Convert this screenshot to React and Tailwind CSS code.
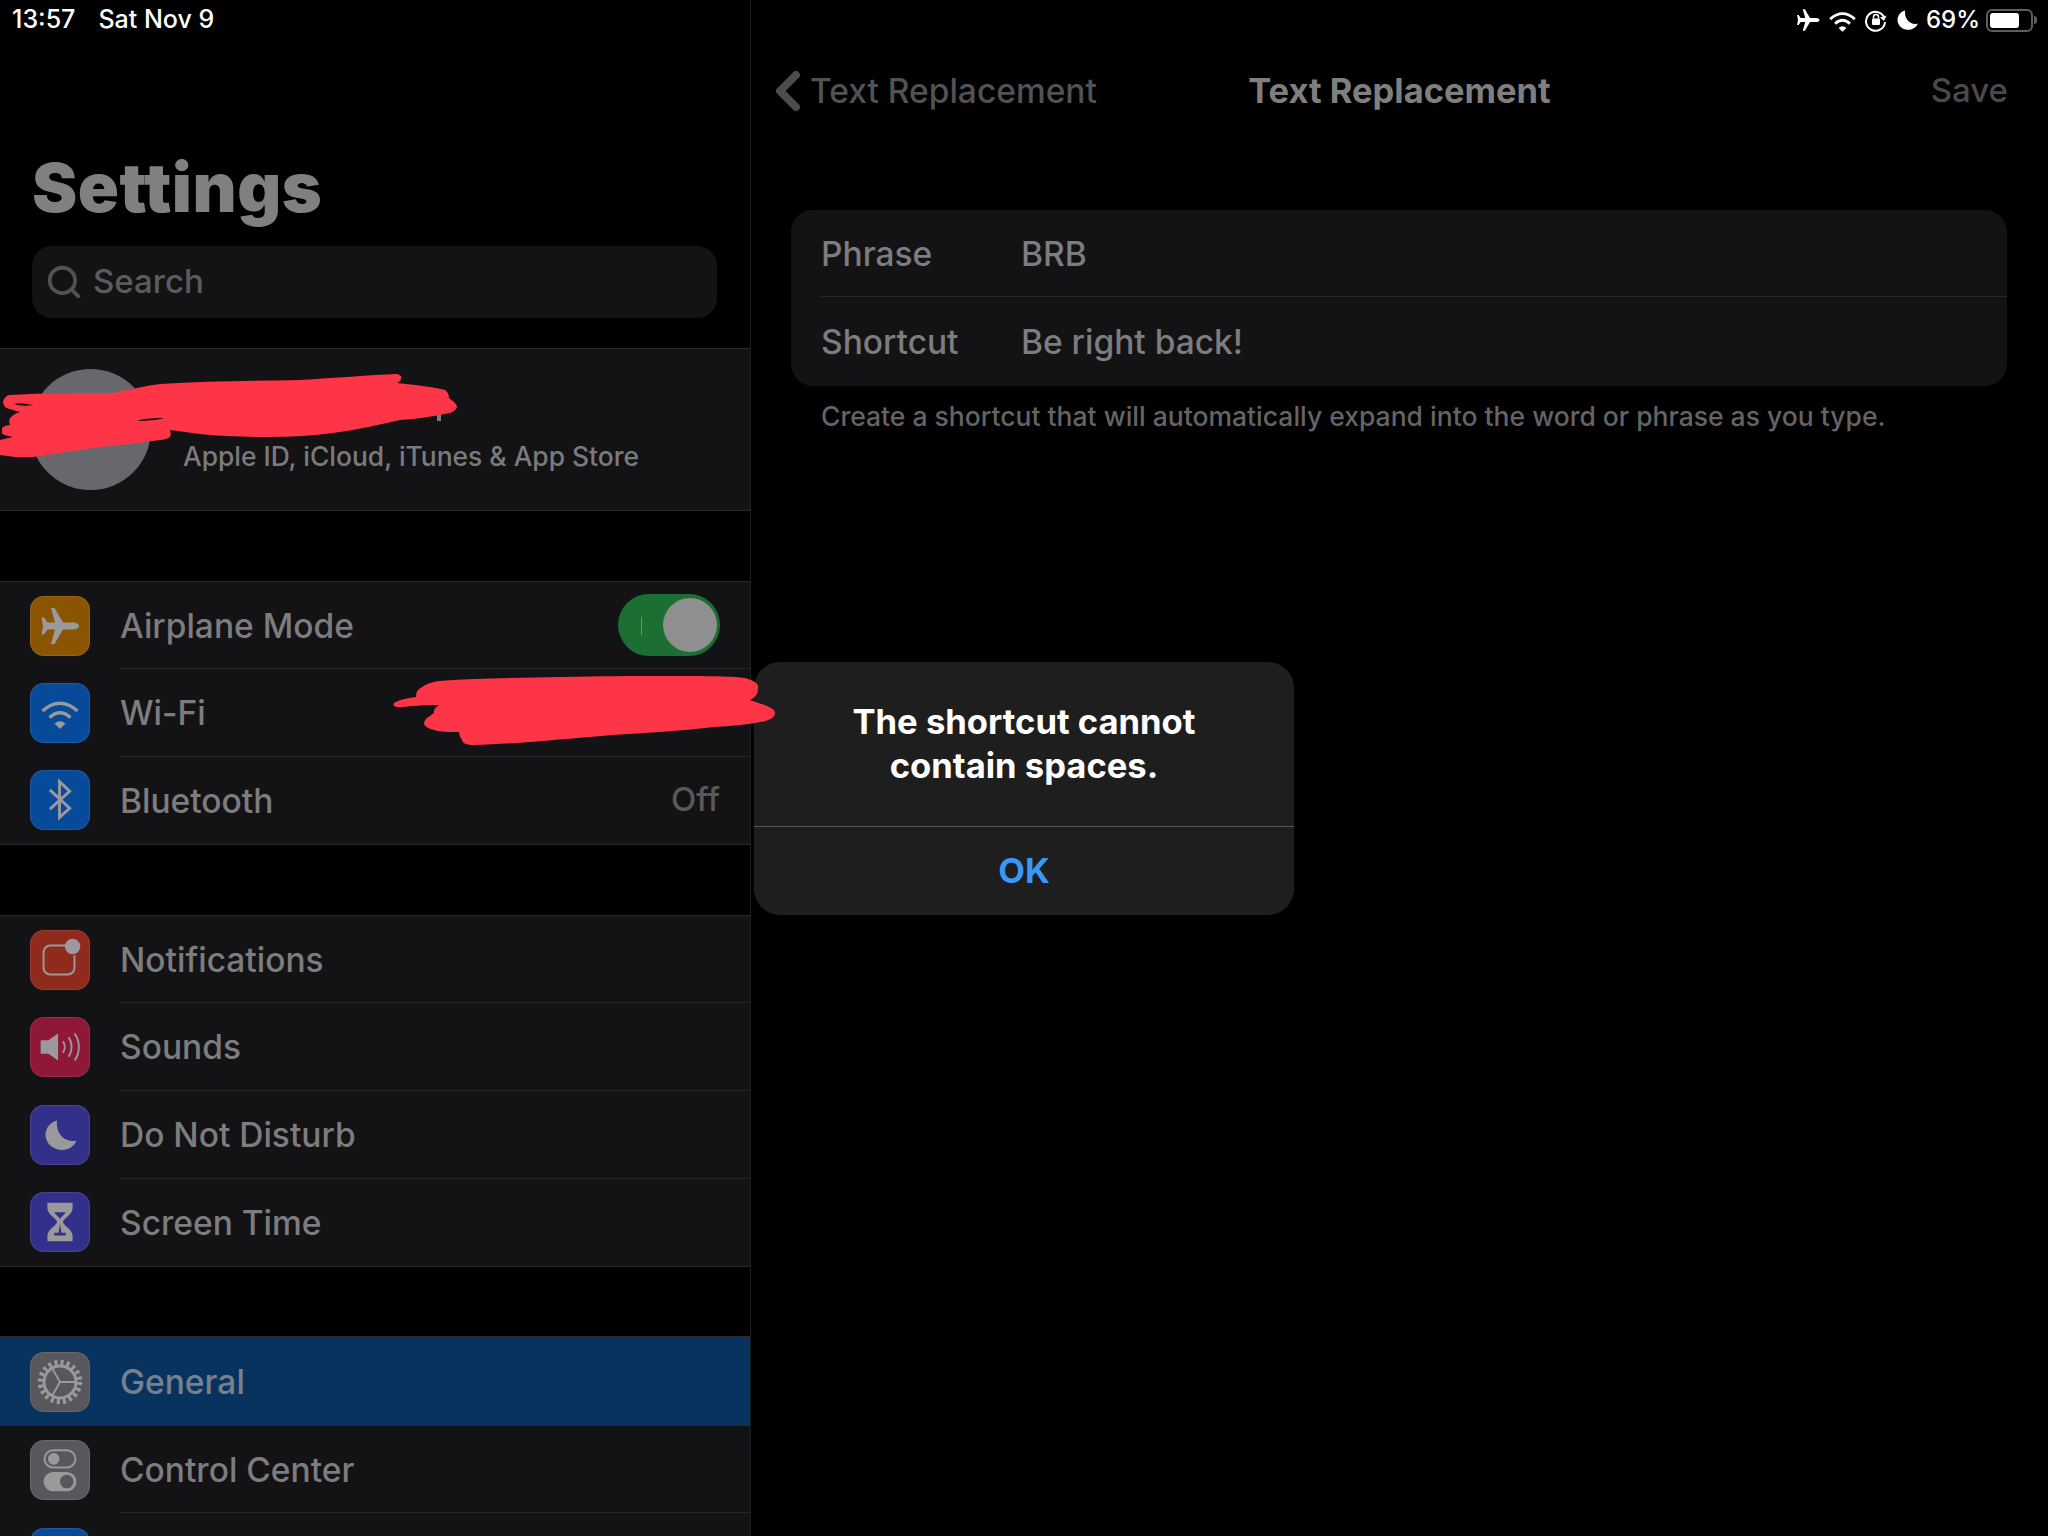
import { Search, ChevronLeft } from 'lucide-react';

const glyph = '#9a9a9c';

function PlaneGlyph({ className = 'w-[41px] h-[40px]', fill = glyph }) {
  return (
    <svg viewBox="10 9 41 40" className={className}>
      <path fill={fill} d="M49 29c0 2-3 3.500-6 3.500H33L24.500 47H21l4-14.500h-7.500L14 37.500h-2.500L13 29l-1.500-8.500H14l3.500 5H25L21 11h3.500L33 25.500h10c3 0 6 1.500 6 3.500z" />
    </svg>
  );
}

function WifiGlyph({ className = 'w-[44px] h-[38px]', color = glyph, weight = '3.200' }) {
  return (
    <svg viewBox="8 9 44 38" className={className} fill="none" stroke={color} strokeWidth={weight}>
      <path d="M12.500 26Q30 10.500 47.500 26" />
      <path d="M19.500 32.500Q30 23 40.500 32.500" />
      <path d="M24.500 38.500Q30 34 35.500 38.500L30 44z" fill={color} stroke="none" />
    </svg>
  );
}

function BluetoothGlyph() {
  return (
    <svg viewBox="0 0 60 60" className="w-[60px] h-[60px]" fill="none" stroke={glyph} strokeWidth="3">
      <path d="M19.500 19.500L40 38.500L29.500 48V11L40 21L19.500 39.500" />
    </svg>
  );
}

function BellGlyph() {
  return (
    <svg viewBox="0 0 60 60" className="w-[60px] h-[60px]" fill="none" stroke={glyph} strokeWidth="2">
      <path d="M36 15H20a7 7 0 0 0-7 7v16a7 7 0 0 0 7 7h18a7 7 0 0 0 7-7V25" />
      <circle cx="43" cy="16" r="8" fill={glyph} stroke="none" />
    </svg>
  );
}

function SoundGlyph() {
  return (
    <svg viewBox="0 0 60 60" className="w-[60px] h-[60px]" fill="none" stroke={glyph}>
      <path d="M10 23h8l10-7v28l-10-7h-8z" fill={glyph} stroke="none" />
      <path d="M33 24c2.500 3.500 2.500 8.500 0 12" strokeWidth="2" />
      <path d="M39 20c4 6 4 14 0 20" strokeWidth="2" />
      <path d="M45 16c6 8 6 20 0 28" strokeWidth="2" />
    </svg>
  );
}

function MoonGlyph({ className = 'w-[60px] h-[60px]', fill = glyph }) {
  return (
    <svg viewBox="0 0 60 60" className={className}>
      <path fill={fill} d="M27 15c-1.500 12 6 23 20 21-2.500 6-9 10-15.500 9.500C22 45 15 38 15 29.500 15 23 20 16.500 27 15z" />
    </svg>
  );
}

function HourglassGlyph() {
  return (
    <svg viewBox="0 0 60 60" className="w-[60px] h-[60px]">
      <path fill={glyph} d="M17 10h26v6c0 6-9 10-10 14 1 4 10 8 10 14v6H17v-6c0-6 9-10 10-14-1-4-10-8-10-14z" />
      <path fill="#33308a" d="M24 20h12c-2 3-5 5-6 7-1-2-4-4-6-7zM30 32l1.500 9h4.500v3H24v-3h4.500z" />
    </svg>
  );
}

function GearGlyph() {
  return (
    <svg viewBox="0 0 60 60" className="w-[60px] h-[60px]" fill="none" stroke={glyph}>
      <circle cx="30" cy="30" r="20" strokeWidth="6" strokeDasharray="3.100 3.180" />
      <circle cx="30" cy="30" r="16.500" strokeWidth="3" />
      <path d="M30 30H46M30 30l-8 13.900M30 30l-8-13.900" strokeWidth="2" />
    </svg>
  );
}

function ControlGlyph() {
  return (
    <svg viewBox="0 0 60 60" className="w-[60px] h-[60px]" fill="none">
      <rect x="14" y="9.500" width="32" height="18" rx="9" stroke={glyph} strokeWidth="2" />
      <circle cx="23.500" cy="18.500" r="6" fill={glyph} />
      <rect x="13" y="32" width="34" height="20" rx="10" fill={glyph} />
      <circle cx="37" cy="42" r="7" fill="#58585c" />
    </svg>
  );
}

function RotationLock() {
  return (
    <svg viewBox="0 0 24 24" className="w-[24px] h-[24px]" fill="none" stroke="#fff" strokeWidth="2">
      <path d="M20 9A9.500 9.500 0 1 0 21 14" />
      <path d="M22.500 7.500L20 13l-4-3.500z" fill="#fff" stroke="none" />
      <rect x="8" y="10.500" width="8" height="6.500" rx="1" fill="#fff" stroke="none" />
      <path d="M9.500 10.500V9a2.500 2.500 0 0 1 5 0v1.500" strokeWidth="1.500" />
    </svg>
  );
}

function Tile({ color, children }) {
  return (
    <div className={`w-[60px] h-[60px] shrink-0 rounded-[14px] flex items-center justify-center border border-white/10 ${color}`}>
      {children}
    </div>
  );
}

function Row({ tile, label, right, selected, last, height = 'h-[87.6px]' }) {
  return (
    <div className={`${height} flex items-center pl-[30px] ${selected ? 'bg-[#09335f]' : ''}`}>
      {tile}
      <div className={`ml-[30px] flex-1 h-full flex items-center justify-between pr-[30px] ${last || selected ? '' : 'border-b border-[#252527]'}`}>
        <span className={`text-[33.500px] font-medium pt-[1px] ${selected ? 'text-[#77818e]' : 'text-[#7d7d7f]'}`}>{label}</span>
        {right}
      </div>
    </div>
  );
}

function Group({ children, className = '' }) {
  return <div className={`bg-[#131315] border-y border-[#2a2a2c] ${className}`}>{children}</div>;
}

function AirplaneToggle() {
  return (
    <div className="relative w-[102px] h-[62px] rounded-full bg-[#1b6f33] flex items-center justify-end pr-[3px]">
      <div className="absolute left-[23px] top-[23px] w-px h-[18px] bg-[#5f9a6f]" />
      <div className="w-[54px] h-[54px] rounded-full bg-[#8f8f8f]" />
    </div>
  );
}

export default function App() {
  return (
    <div className="relative w-[2048px] h-[1536px] overflow-hidden bg-black flex font-['Inter',sans-serif]">
      <aside className="w-[751px] h-full shrink-0 border-r border-[#1d1d1f] overflow-hidden">
        <div className="h-[40px] pl-[12px] flex items-center gap-[23px] text-[25px] font-medium text-white">
          <span>13:57</span>
          <span>Sat Nov 9</span>
        </div>
        <h1 className="h-[206px] pl-[32px] pt-[107px] text-[68px] leading-[80px] font-black tracking-[0.5px] text-[#808080]">Settings</h1>
        <div className="mx-[32px] w-[685px] h-[72px] rounded-[20px] bg-[#131315] flex items-center pl-[13px] gap-[10px] text-[33px] font-medium text-[#5c5c5e]">
          <Search size={38} strokeWidth={2.4} className="text-[#525254]" />
          <span className="-mt-[1px]">Search</span>
        </div>

        <Group className="mt-[30px] h-[163px] flex items-center pl-[30px]">
          <div className="w-[121px] h-[121px] rounded-full bg-[#68686c] shrink-0" />
          <div className="ml-[32px] mt-[55px] text-[26.400px] font-medium text-[#7b7b7d]">Apple ID, iCloud, iTunes &amp; App Store</div>
        </Group>

        <Group className="mt-[70px]">
          <Row height="h-[87.300px]" tile={<Tile color="bg-[#8a5400]"><PlaneGlyph /></Tile>} label="Airplane Mode" right={<AirplaneToggle />} />
          <Row height="h-[87.300px]" tile={<Tile color="bg-[#074a9a]"><WifiGlyph /></Tile>} label="Wi-Fi" />
          <Row
            height="h-[87.300px]"
            tile={<Tile color="bg-[#074a9a]"><BluetoothGlyph /></Tile>}
            label="Bluetooth"
            right={<span className="text-[33px] font-medium text-[#59595c]">Off</span>}
            last
          />
        </Group>

        <Group className="mt-[70px]">
          <Row tile={<Tile color="bg-[#8f2a1c]"><BellGlyph /></Tile>} label="Notifications" />
          <Row tile={<Tile color="bg-[#8f1836]"><SoundGlyph /></Tile>} label="Sounds" />
          <Row tile={<Tile color="bg-[#33308a]"><MoonGlyph /></Tile>} label="Do Not Disturb" />
          <Row tile={<Tile color="bg-[#33308a]"><HourglassGlyph /></Tile>} label="Screen Time" last />
        </Group>

        <Group className="mt-[69px] border-b-0">
          <Row height="h-[88.600px]" tile={<Tile color="bg-[#58585c]"><GearGlyph /></Tile>} label="General" selected />
          <Row tile={<Tile color="bg-[#58585c]"><ControlGlyph /></Tile>} label="Control Center" />
          <div className="h-[87px] pl-[30px] pt-[15px]">
            <Tile color="bg-[#074a9a]" />
          </div>
        </Group>
      </aside>

      <main className="flex-1 min-w-0">
        <div className="h-[40px] pr-[11px] flex items-center justify-end">
          <PlaneGlyph className="w-[25px] h-[24px]" fill="#fff" />
          <WifiGlyph className="w-[31px] h-[27px] ml-[6px]" color="#fff" weight="4" />
          <span className="ml-[6px]"><RotationLock /></span>
          <MoonGlyph className="w-[38px] h-[38px]" fill="#fff" />
          <span className="text-[24px] font-medium text-white">69%</span>
          <div className="ml-[6px] flex items-center">
            <div className="w-[47px] h-[23px] rounded-[6px] border-2 border-[#5e5e60] p-[2px]">
              <div className="w-[29px] h-full rounded-[3px] bg-white" />
            </div>
            <div className="w-[3px] h-[8px] rounded-r-full bg-[#5e5e60] ml-[1px]" />
          </div>
        </div>

        <div className="relative h-[100px] mt-[1px] flex items-center justify-center">
          <div className="absolute left-[15px] top-0 h-full flex items-center text-[33.500px] font-medium text-[#525254]">
            <ChevronLeft size={64} strokeWidth={3} className="text-[#4c4c4e] -ml-[10px] -mr-[10px]" />
            <span>Text Replacement</span>
          </div>
          <span className="text-[34.500px] font-bold text-[#7f7f7f]">Text Replacement</span>
          <span className="absolute right-[40px] text-[33px] font-medium text-[#4a4a4c]">Save</span>
        </div>

        <div className="ml-[40px] mr-[41px] mt-[69px] rounded-[22px] bg-[#131315] pl-[30px]">
          <div className="h-[87px] flex items-center border-b border-[#28282a] text-[33.500px] font-medium text-[#7d7d7f]">
            <span className="w-[200px] pt-[3px]">Phrase</span>
            <span className="pt-[3px]">BRB</span>
          </div>
          <div className="h-[89px] flex items-center text-[33.500px] font-medium text-[#7d7d7f]">
            <span className="w-[200px] pt-[1px]">Shortcut</span>
            <span className="pt-[1px]">Be right back!</span>
          </div>
        </div>
        <p className="ml-[70px] mt-[14px] text-[26.500px] font-medium leading-[32px] text-[#646466]">
          Create a shortcut that will automatically expand into the word or phrase as you type.
        </p>
      </main>

      <div className="absolute left-[754px] top-[662px] w-[540px] h-[253px] rounded-[26px] bg-[#1e1e1f] flex flex-col">
        <div className="h-[164px] pt-[37px] text-center text-[34.600px] leading-[44px] font-bold text-white">
          The shortcut cannot<br />contain spaces.
        </div>
        <div className="flex-1 border-t border-[#555557] flex items-center justify-center text-[34.600px] font-bold text-[#3a96f7]">
          OK
        </div>
      </div>

      {/* red scribbles drawn over the screenshot */}
      <svg viewBox="0 0 2048 1536" className="absolute inset-0 w-[2048px] h-[1536px] pointer-events-none">
        <path fill="#7d7d7f" d="M437 414h4v7h-4z" />
        <path
          fill="#fe3447"
          d="M3 402 C4 398 7 395 10 395 C45 393 80 393 113 393 C128 390 144 386 160 384 C205 381 255 381 300 380 C335 378 370 375 397 374 C401 375 402 377 401 378 C401 381 399 382 397 383 C415 385 435 387 445 390 C448 392 449 395 449 398 C453 401 457 404 457 407 C456 410 453 412 450 413 C435 416 418 419 400 420 C378 425 356 430 333 433 C310 436 288 437 267 437 C243 437 220 436 200 434 C190 433 180 431 170 430 C171 433 171 435 170 437 C167 439 163 440 160 440 C140 443 120 445 100 447 C78 450 55 454 33 457 C26 457 20 457 15 457 L0 455 L0 440 L13 437 C8 436 3 435 2 433 L2 428 C4 426 7 425 10 425 C9 422 9 420 10 418 C13 415 16 413 20 412 C14 410 7 409 5 407 C4 405 3 403 3 402 Z"
        />
        <path fill="#131315" d="M137 421 C145 418 155 418 164 418 C158 420 148 421 137 421 Z" />
        <path fill="#131315" d="M14 404 C20 403 27 404 33 405 C27 406 20 406 14 404 Z" />
        <path
          fill="#fe3447"
          d="M394 703 C398 700 408 698 416 697 C416 693 417 691 418 690 C424 685 430 682 439 681 C480 678 520 678 561 677 C600 676 630 676 663 676 C700 676 730 676 745 678 C755 681 759 684 758 688 C758 694 755 698 750 700 C762 704 775 708 775 713 C775 718 768 721 760 722 C745 725 730 726 714 727 C680 731 645 733 612 735 C565 739 515 744 474 745 C467 745 462 743 462 740 C460 737 459 734 459 732 C450 732 440 732 434 730 C426 728 424 725 424 723 C425 718 430 716 434 713 C433 710 436 707 439 705 C425 705 410 706 403 707 C396 708 392 706 394 703 Z"
        />
      </svg>
    </div>
  );
}
